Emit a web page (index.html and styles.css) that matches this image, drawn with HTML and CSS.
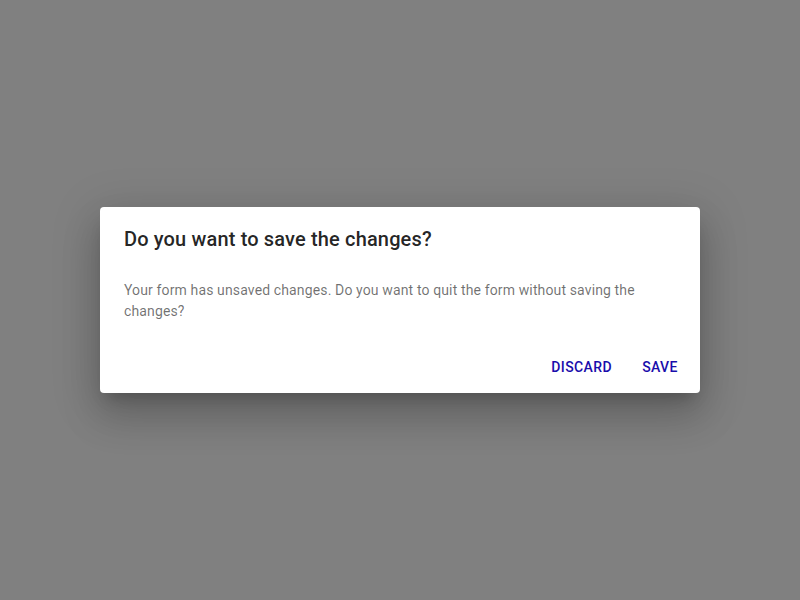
FILE: index.html
```html
<!DOCTYPE html>
<html lang="en">
<head>
<meta charset="utf-8">
<title>Dialog</title>
<link rel="stylesheet" href="styles.css">
</head>
<body>
<div class="backdrop">
  <div class="dialog" role="dialog">
    <h2 class="dialog-title">Do you want to save the changes?</h2>
    <div class="dialog-content">
      <p class="dialog-text">Your form has unsaved changes. Do you want to quit the form without saving the changes?</p>
    </div>
    <div class="dialog-actions">
      <button class="btn">Discard</button>
      <button class="btn">Save</button>
    </div>
  </div>
</div>
</body>
</html>
```

FILE: styles.css
```css
html, body {
  margin: 0;
  padding: 0;
  height: 100%;
}
body {
  font-family: Roboto, "Liberation Sans", sans-serif;
  background: #808080;
}
.backdrop {
  height: 100vh;
  display: flex;
  align-items: center;
  justify-content: center;
}
.dialog {
  width: 600px;
  background: #fff;
  border-radius: 4px;
  box-shadow: 0px 11px 15px -7px rgba(0,0,0,0.2), 0px 24px 38px 3px rgba(0,0,0,0.14), 0px 9px 46px 8px rgba(0,0,0,0.12);
  display: flex;
  flex-direction: column;
}
.dialog-title {
  margin: 0;
  padding: 16px 24px;
  font-size: 20px;
  font-weight: 500;
  line-height: 32px;
  letter-spacing: 0.0075em;
  color: rgba(0,0,0,0.87);
}
.dialog-content {
  padding: 9px 24px 19px;
}
.dialog-text {
  margin: 0;
  font-size: 14px;
  line-height: 21px;
  color: rgba(0,0,0,0.56);
  letter-spacing: 0.00938em;
}
.dialog-actions {
  padding: 8px;
  display: flex;
  justify-content: flex-end;
  gap: 8px;
}
.btn {
  font-family: Roboto, "Liberation Sans", sans-serif;
  min-width: 64px;
  padding: 6px 8px;
  border: 0;
  background: transparent;
  font-size: 14px;
  font-weight: 500;
  line-height: 24.5px;
  letter-spacing: 0.02857em;
  text-transform: uppercase;
  color: #1a0dab;
  border-radius: 4px;
  cursor: pointer;
}
```
